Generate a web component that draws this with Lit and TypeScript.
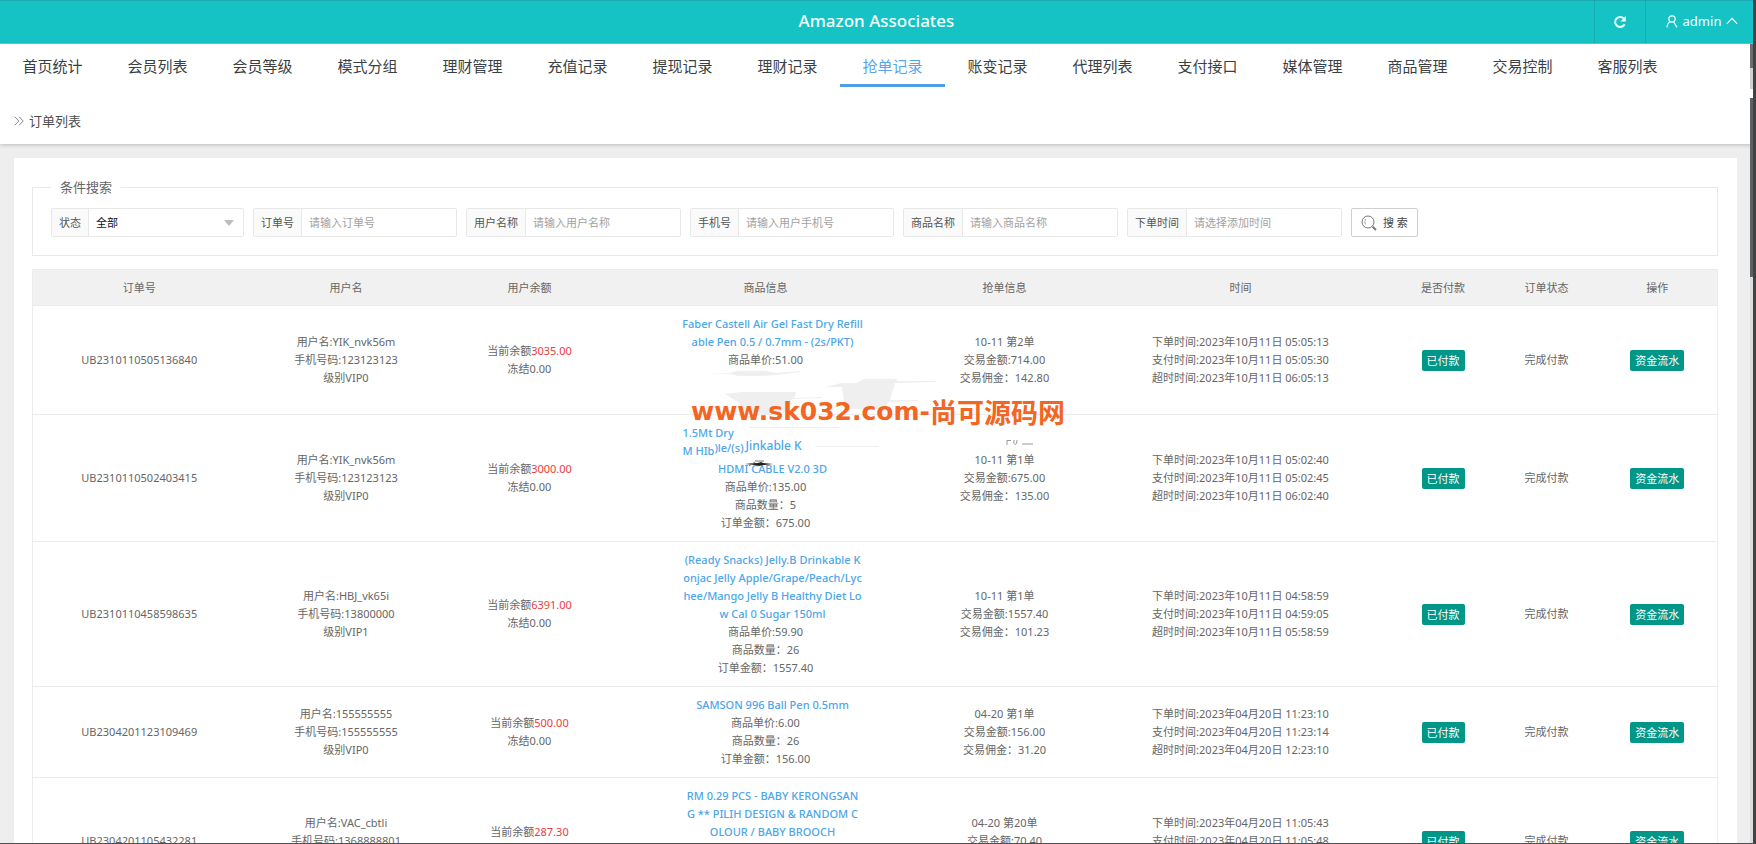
import { LitElement, html, css, svg } from "lit";
import { customElement, state } from "lit/decorators.js";

interface Order {
  id: string;
  user: string;
  phone: string;
  level: string;
  balance: string;
  title: string[];
  price: string;
  count?: string;
  amount?: string;
  grab: string;
  deal: string;
  commission: string;
  times: [string, string, string];
  kind?: "faded" | "smeared";
}

const MENU = [
  "首页统计", "会员列表", "会员等级", "模式分组", "理财管理", "充值记录", "提现记录", "理财记录",
  "抢单记录", "账变记录", "代理列表", "支付接口", "媒体管理", "商品管理", "交易控制", "客服列表",
];

const FILTERS = [
  { id: "order", label: "订单号", hint: "请输入订单号" },
  { id: "name", label: "用户名称", hint: "请输入用户名称" },
  { id: "phone", label: "手机号", hint: "请输入用户手机号" },
  { id: "goods", label: "商品名称", hint: "请输入商品名称" },
  { id: "date", label: "下单时间", hint: "请选择添加时间" },
];

const HEADS = ["订单号", "用户名", "用户余额", "商品信息", "抢单信息", "时间", "是否付款", "订单状态", "操作"];

const ORDERS: Order[] = [
  {
    id: "UB2310110505136840", user: "YIK_nvk56m", phone: "123123123", level: "VIP0", balance: "3035.00",
    title: ["Faber Castell Air Gel Fast Dry Refill", "able Pen 0.5 / 0.7mm - (2s/PKT)"],
    price: "51.00", grab: "10-11 第2单", deal: "714.00", commission: "142.80",
    times: ["2023年10月11日 05:05:13", "2023年10月11日 05:05:30", "2023年10月11日 06:05:13"],
    kind: "faded",
  },
  {
    id: "UB2310110502403415", user: "YIK_nvk56m", phone: "123123123", level: "VIP0", balance: "3000.00",
    title: ["HDMI CABLE V2.0 3D"],
    price: "135.00", count: "5", amount: "675.00", grab: "10-11 第1单", deal: "675.00", commission: "135.00",
    times: ["2023年10月11日 05:02:40", "2023年10月11日 05:02:45", "2023年10月11日 06:02:40"],
    kind: "smeared",
  },
  {
    id: "UB2310110458598635", user: "HBJ_vk65i", phone: "13800000", level: "VIP1", balance: "6391.00",
    title: [
      "(Ready Snacks) Jelly.B Drinkable K", "onjac Jelly Apple/Grape/Peach/Lyc",
      "hee/Mango Jelly B Healthy Diet Lo", "w Cal 0 Sugar 150ml",
    ],
    price: "59.90", count: "26", amount: "1557.40", grab: "10-11 第1单", deal: "1557.40", commission: "101.23",
    times: ["2023年10月11日 04:58:59", "2023年10月11日 04:59:05", "2023年10月11日 05:58:59"],
  },
  {
    id: "UB2304201123109469", user: "155555555", phone: "155555555", level: "VIP0", balance: "500.00",
    title: ["SAMSON 996 Ball Pen 0.5mm"],
    price: "6.00", count: "26", amount: "156.00", grab: "04-20 第1单", deal: "156.00", commission: "31.20",
    times: ["2023年04月20日 11:23:10", "2023年04月20日 11:23:14", "2023年04月20日 12:23:10"],
  },
  {
    id: "UB2304201105432281", user: "VAC_cbtli", phone: "1368888801", level: "VIP0", balance: "287.30",
    title: ["RM 0.29 PCS - BABY KERONGSAN", "G ** PILIH DESIGN & RANDOM C", "OLOUR / BABY BROOCH"],
    price: "3.52", count: "20", amount: "70.40", grab: "04-20 第20单", deal: "70.40", commission: "14.08",
    times: ["2023年04月20日 11:05:43", "2023年04月20日 11:05:48", "2023年04月20日 12:05:43"],
  },
];

@customElement("app-root")
export class AppRoot extends LitElement {
  @state() private active = "抢单记录";

  static styles = css`
    :host {
      display: block;
      position: relative;
      box-sizing: border-box;
      height: 100vh;
      overflow: hidden;
      border-right: 3px solid #404244;
      border-bottom: 1px solid #505052;
      background: #eeeeee;
      color: #666666;
      font: 11px/18px "Noto Sans", "Noto Sans CJK SC", sans-serif;
    }
    * { box-sizing: border-box; }
    button, input, select { font: inherit; color: inherit; margin: 0; }
    a { text-decoration: none; }

    .top {
      display: grid;
      grid-template-columns: 1fr auto 1fr;
      align-items: stretch;
      height: 44px;
      border-top: 1px solid #1aa9ae;
      border-bottom: 1px solid #5fd3d5;
      background: #15c3c5;
      color: #f4ffff;
    }
    .brand {
      grid-column: 2;
      margin: 0;
      font-size: 17px;
      line-height: 40px;
      font-weight: 500;
    }
    .tools { display: flex; justify-content: flex-end; }
    .tool {
      display: flex;
      align-items: center;
      justify-content: center;
      width: 51px;
      padding: 0;
      border: 0;
      border-left: 1px solid #14acb0;
      background: none;
      color: inherit;
    }
    .account { width: 108px; gap: 5px; padding-left: 5px; font-size: 13px; line-height: 18px; padding-bottom: 2px; }

    .bar {
      position: relative;
      background: #ffffff;
      box-shadow: 0 1px 4px rgba(0, 0, 0, 0.22);
    }
    .menu { display: flex; height: 43px; color: #3a3f44; }
    .menu a {
      flex: 0 0 105px;
      border-bottom: 3px solid transparent;
      color: inherit;
      font-size: 15px;
      line-height: 44px;
      text-align: center;
    }
    .menu a.on { color: #56a5ee; border-color: #509de8; }
    .crumb {
      display: flex;
      align-items: center;
      gap: 5px;
      margin: 0;
      height: 57px;
      padding: 10px 14px 0;
      color: #4c4c4c;
      font-size: 13px;
      font-weight: 400;
    }

    .card { margin: 14px 16px 0 14px; padding: 20px 19px 20px 18px; background: #ffffff; }
    .filter {
      display: flex;
      flex-wrap: wrap;
      gap: 9px;
      min-width: 0;
      margin: 0;
      padding: 12px 18px 18px;
      border: 1px solid #e9e9e9;
    }
    .filter legend { padding: 0 9px; font-size: 13px; line-height: 18px; }
    .field { display: flex; height: 29px; border: 1px solid #e8e8e8; border-radius: 2px; }
    .field label {
      padding: 0 7px;
      border-right: 1px solid #e8e8e8;
      background: #fafafa;
      color: #555555;
      line-height: 28px;
    }
    .field input {
      width: 154px;
      padding: 0 7px;
      border: 0;
      background: none;
      outline: none;
    }
    .field input::placeholder { color: #a2a2a2; opacity: 1; }
    .picker { display: grid; align-items: center; }
    .picker select {
      grid-area: 1 / 1;
      appearance: none;
      width: 154px;
      height: 27px;
      padding: 0 7px;
      border: 0;
      background: none;
      color: #111111;
      outline: none;
    }
    .picker svg { grid-area: 1 / 1; justify-self: end; margin-right: 9px; pointer-events: none; }
    .search {
      display: flex;
      align-items: center;
      gap: 6px;
      height: 29px;
      padding: 0 9px;
      border: 1px solid #cfcfcf;
      border-radius: 2px;
      background: #ffffff;
      color: #444444;
    }

    .orders {
      width: 100%;
      margin-top: 13px;
      border: 1px solid #ececec;
      border-collapse: collapse;
      table-layout: fixed;
      text-align: center;
    }
    .orders th { height: 36px; padding: 0; background: #f1f1f1; font-weight: 400; }
    .orders td { padding: 9px 0; border-top: 1px solid #ececec; white-space: nowrap; }
    .c1 { width: 213px; }
    .c2 { width: 201px; }
    .c3 { width: 166px; }
    .c4 { width: 306px; }
    .c5 { width: 172px; }
    .c6 { width: 300px; }
    .c7 { width: 105px; }
    .c8 { width: 102px; }
    .c9 { width: 120px; }
    .red { color: #ee3b3b; }
    .goods { display: block; padding-left: 14px; color: #4ba6ea; font-weight: 500; }
    .torn { display: flex; width: 180px; height: 18px; margin: 0 auto; }
    .mid { padding-bottom: 3px; align-self: flex-end; }
    .high { align-self: flex-end; padding: 0 0 5px 2px; font-size: 12px; }
    .blank { display: block; height: 36px; }
    .tag {
      display: inline-block;
      height: 21px;
      padding: 0 5px;
      border: 0;
      border-radius: 2px;
      background: #009688;
      color: #ffffff;
      line-height: 21px;
      vertical-align: middle;
    }

    .smudge { position: absolute; left: 50%; top: 360px; margin-left: -178px; pointer-events: none; }
    .mark {
      position: absolute;
      left: 0;
      right: -3px;
      top: 393px;
      display: flex;
      justify-content: center;
      align-items: center;
      color: #f26522;
      font: bold 25px/38px "DejaVu Sans", sans-serif;
      pointer-events: none;
    }
    .mark b { font: 700 27px/38px "Noto Sans CJK SC", sans-serif; }
    .scroll { position: absolute; right: 0; width: 3px; }
    .outer { top: 44px; height: 45px; background: linear-gradient(#6d6d6d 24px, #d0d0d0 24px); }
    .inner { top: 98px; bottom: 0; background: linear-gradient(#5f6062 179px, #dddddd 179px); }
  `;

  private renderGoods(o: Order) {
    return html`
      <a class="goods" href="#goods">
        ${o.kind === "smeared"
          ? html`<span class="torn">1.5Mt Dry</span>
              <span class="torn"><span>M HIb</span><span class="mid">)le/(s)</span><span class="high">Jinkable K</span></span>`
          : ""}
        ${o.title.map((t, i) => html`${i ? html`<br />` : ""}${t}`)}
      </a>
      商品单价:${o.price}
      ${o.kind === "faded"
        ? html`<span class="blank"></span>`
        : html`<br />商品数量：${o.count}<br />订单金额：${o.amount}`}
    `;
  }

  private renderOrder(o: Order) {
    return html`<tr>
      <td>${o.id}</td>
      <td>用户名:${o.user}<br />手机号码:${o.phone}<br />级别${o.level}</td>
      <td>当前余额<span class="red">${o.balance}</span><br />冻结0.00</td>
      <td>${this.renderGoods(o)}</td>
      <td>${o.grab}<br />交易金额:${o.deal}<br />交易佣金：${o.commission}</td>
      <td>下单时间:${o.times[0]}<br />支付时间:${o.times[1]}<br />超时时间:${o.times[2]}</td>
      <td><span class="tag">已付款</span></td>
      <td>完成付款</td>
      <td><button class="tag" type="button">资金流水</button></td>
    </tr>`;
  }

  private smudges() {
    return svg`
      <g fill="#efefef">
        <path d="M12 13h20l5-2h30l10 2 24-2v1l-24 3-12 1h-26l-8-2z"/>
        <path d="M26 34l16-2h55l-2 6 28-1v1l-30 1-8 14-20 1-18-2-7-9z"/>
        <path d="M127 27l15-4h15l8-4h34l-2 2h40v1l-41 1-5 17h28v1l-30 1-3 7h-40l-3-22z"/>
        <path d="M50 67h90v1H50zM117 86h63v1h-63z"/>
      </g>
      <path d="M46 104q8-1 13-1l3-1 2 1 10 1q-11 1-14 2l-4-1z" fill="#222"/>
      <path d="M50 106l6-4M56 101h9" stroke="#777" fill="none"/>
      <path d="M308 80v5M308 80.500h4M315 80q-1 4 1 4.500t2-4.500M323 84h11" stroke="#999" fill="none"/>
    `;
  }

  render() {
    return html`
      <header class="top">
        <h1 class="brand">Amazon Associates</h1>
        <div class="tools">
          <button class="tool" type="button" aria-label="刷新">
            <svg width="14" height="14" viewBox="0 0 14 14" fill="none" stroke="currentColor" stroke-width="2">
              <path d="M11.6 9.2A5 5 0 1 1 10.6 3.4" />
              <path d="M12.8 1v5.4H7.4z" fill="currentColor" stroke="none" />
            </svg>
          </button>
          <button class="tool account" type="button">
            <svg width="12" height="13" viewBox="0 0 12 13" fill="none" stroke="currentColor" stroke-width="1.2">
              <circle cx="6" cy="4" r="3.2" />
              <path d="M4.4 6.8C2.3 7.6 1.2 9.6 1 12.4M7.6 6.8L11 12.4" />
            </svg>
            admin
            <svg width="12" height="8" viewBox="0 0 12 8" fill="none" stroke="currentColor" stroke-width="1.2">
              <path d="M.8 6.8L6 1.4l5.2 5.4" />
            </svg>
          </button>
        </div>
      </header>

      <div class="bar">
        <nav class="menu">
          ${MENU.map(
            (m) => html`<a href="#${m}" class=${m === this.active ? "on" : ""} @click=${() => (this.active = m)}>${m}</a>`
          )}
        </nav>
        <h2 class="crumb">
          <svg width="10" height="10" viewBox="0 0 10 10" fill="none" stroke="#888">
            <path d="M.8.8L4.8 5l-4 4.2M5.2.8L9.2 5l-4 4.2" />
          </svg>
          订单列表
        </h2>
      </div>

      <main class="card">
        <form @submit=${(e: Event) => e.preventDefault()}>
          <fieldset class="filter">
            <legend>条件搜索</legend>
            <div class="field">
              <label for="status">状态</label>
              <span class="picker">
                <select id="status"><option>全部</option></select>
                <svg width="10" height="6" viewBox="0 0 10 6"><path d="M0 0h10L5 6z" fill="#bdbdbd" /></svg>
              </span>
            </div>
            ${FILTERS.map(
              (f) => html`<div class="field">
                <label for=${f.id}>${f.label}</label>
                <input id=${f.id} type="text" placeholder=${f.hint} />
              </div>`
            )}
            <button class="search" type="submit">
              <svg width="16" height="16" viewBox="0 0 16 16" fill="none" stroke="#777">
                <circle cx="7" cy="7" r="6" />
                <path d="M4.6 4q-1.5 2.6-.2 5.4" stroke="#aaa" />
                <path d="M11.6 11.6l3.4 3.4" stroke-width="2" />
              </svg>
              搜 索
            </button>
          </fieldset>
        </form>

        <table class="orders">
          <colgroup>${HEADS.map((_, i) => html`<col class="c${i + 1}" />`)}</colgroup>
          <thead><tr>${HEADS.map((h) => html`<th scope="col">${h}</th>`)}</tr></thead>
          <tbody>${ORDERS.map((o) => this.renderOrder(o))}</tbody>
        </table>
      </main>

      <svg class="smudge" width="350" height="112" viewBox="0 0 350 112" aria-hidden="true">${this.smudges()}</svg>
      <div class="mark">www.sk032.com-<b>尚可源码网</b></div>
      <div class="scroll outer"></div>
      <div class="scroll inner"></div>
    `;
  }
}
